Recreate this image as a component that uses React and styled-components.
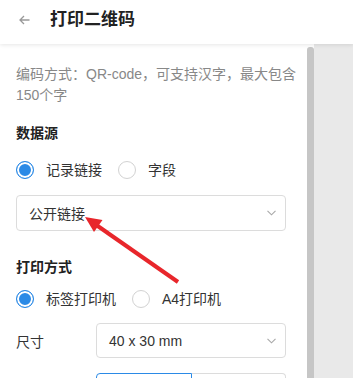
import React from 'react';
import styled, { createGlobalStyle } from 'styled-components';

const GlobalStyle = createGlobalStyle`
  html, body {
    margin: 0;
    padding: 0;
    background: #fff;
  }
  * {
    box-sizing: border-box;
  }
  body {
    font-family: "Liberation Sans", "Noto Sans CJK SC", sans-serif;
  }
`;

const Page = styled.div`
  position: relative;
  width: 353px;
  height: 378px;
  overflow: hidden;
  display: flex;
  flex-direction: column;
  background: #fff;
`;

const Header = styled.header`
  position: relative;
  z-index: 1;
  flex-shrink: 0;
  height: 44px;
  display: flex;
  align-items: center;
  gap: 20px;
  padding: 0 0 5px 19px;
  background: #fff;
  box-shadow: 0 1px 4px rgba(0, 0, 0, 0.1);
`;

const Title = styled.h1`
  margin: 0;
  font-size: 17px;
  font-weight: 700;
  line-height: 24px;
  color: #222;
`;

const Body = styled.div`
  flex: 1;
  min-height: 0;
  display: flex;
`;

const Content = styled.main`
  width: 307px;
  flex-shrink: 0;
  padding: 20px 21px 0 16px;
  background: #fff;
`;

const Track = styled.div`
  width: 7px;
  flex-shrink: 0;
  display: flex;
  padding-top: 3px;
  background: #fff;
`;

const Thumb = styled.div`
  flex: 1;
  width: 6px;
  background: #c6c6c6;
  border-radius: 3px 3px 0 0;
`;

const Side = styled.aside`
  flex: 1;
  background: #e9e9e9;
`;

const Desc = styled.p`
  margin: 0 -14px 0 0;
  font-size: 14px;
  line-height: 21px;
  color: #888;
`;

const SectionTitle = styled.h2`
  margin: ${p => p.$top}px 0 0;
  font-size: 14px;
  font-weight: 700;
  line-height: 20px;
  color: #222;
`;

const RadioGroup = styled.div`
  display: flex;
  align-items: center;
  height: 20px;
  margin-top: ${p => p.$top}px;
`;

const RadioItem = styled.label`
  display: flex;
  align-items: center;
  gap: 12px;
  margin-right: 16px;
  font-size: 14px;
  line-height: 20px;
  color: #333;
`;

const RadioDot = styled.span`
  width: 18px;
  height: 18px;
  border-radius: 50%;
  border: 1px solid ${p => (p.$checked ? '#2b8ae6' : '#d2d2d2')};
  background: ${p => (p.$checked ? '#2b8ae6' : '#fff')};
  box-shadow: ${p => (p.$checked ? 'inset 0 0 0 2px #fff' : 'none')};
`;

const Select = styled.div`
  flex: 1;
  height: ${p => p.$height}px;
  display: flex;
  align-items: center;
  justify-content: space-between;
  padding: 0 9px 0 12px;
  border: 1px solid #dcdcdc;
  border-radius: 4px;
  font-size: 14px;
  color: #333;
`;

const FieldRow = styled.div`
  display: flex;
  align-items: center;
  margin-top: ${p => p.$top}px;
`;

const FieldLabel = styled.span`
  width: 80px;
  flex-shrink: 0;
  font-size: 14px;
  color: #333;
`;

const Segmented = styled.div`
  display: flex;
  margin: ${p => p.$top}px 0 0 80px;
  height: 32px;
`;

const Segment = styled.div`
  flex: 1;
  border: 1px solid ${p => (p.$active ? '#2b8ae6' : '#dcdcdc')};
  border-radius: ${p => (p.$first ? '4px 0 0 4px' : '0 4px 4px 0')};
  ${p => (p.$first ? '' : 'border-left: none;')}
`;

const Annotation = styled.svg`
  position: absolute;
  left: 0;
  top: 0;
  pointer-events: none;
`;

const BackIcon = () => (
  <svg width="11" height="10" viewBox="0 0 11 10" fill="none" stroke="#999" strokeWidth="1.3">
    <path d="M10.5 5H1M5 1L1 5l4 4" />
  </svg>
);

const Chevron = () => (
  <svg width="9" height="6" viewBox="0 0 9 6" fill="none" stroke="#a8a8a8" strokeWidth="1.1">
    <path d="M0.5 0.8L4.5 4.8L8.5 0.8" />
  </svg>
);

const Radio = ({ checked, children }) => (
  <RadioItem>
    <RadioDot $checked={checked} />
    {children}
  </RadioItem>
);

export default function App() {
  return (
    <Page>
      <GlobalStyle />
      <Header>
        <BackIcon />
        <Title>打印二维码</Title>
      </Header>
      <Body>
        <Content>
          <Desc>编码方式：QR-code，可支持汉字，最大包含150个字</Desc>

          <SectionTitle $top={17}>数据源</SectionTitle>
          <RadioGroup $top={17}>
            <Radio checked>记录链接</Radio>
            <Radio>字段</Radio>
          </RadioGroup>
          <FieldRow $top={15}>
            <Select $height={36}>
              公开链接
              <Chevron />
            </Select>
          </FieldRow>

          <SectionTitle $top={26}>打印方式</SectionTitle>
          <RadioGroup $top={12}>
            <Radio checked>标签打印机</Radio>
            <Radio>A4打印机</Radio>
          </RadioGroup>
          <FieldRow $top={14}>
            <FieldLabel>尺寸</FieldLabel>
            <Select $height={35}>
              40 x 30 mm
              <Chevron />
            </Select>
          </FieldRow>
          <Segmented $top={15}>
            <Segment $first $active />
            <Segment />
          </Segmented>
        </Content>
        <Track>
          <Thumb />
        </Track>
        <Side />
      </Body>
      <Annotation width="353" height="378" viewBox="0 0 353 378">
        <line x1="97" y1="225.5" x2="178" y2="282" stroke="#e8262b" strokeWidth="4" />
        <polygon points="85,217 94,232 102.5,220" fill="#e8262b" />
      </Annotation>
    </Page>
  );
}
